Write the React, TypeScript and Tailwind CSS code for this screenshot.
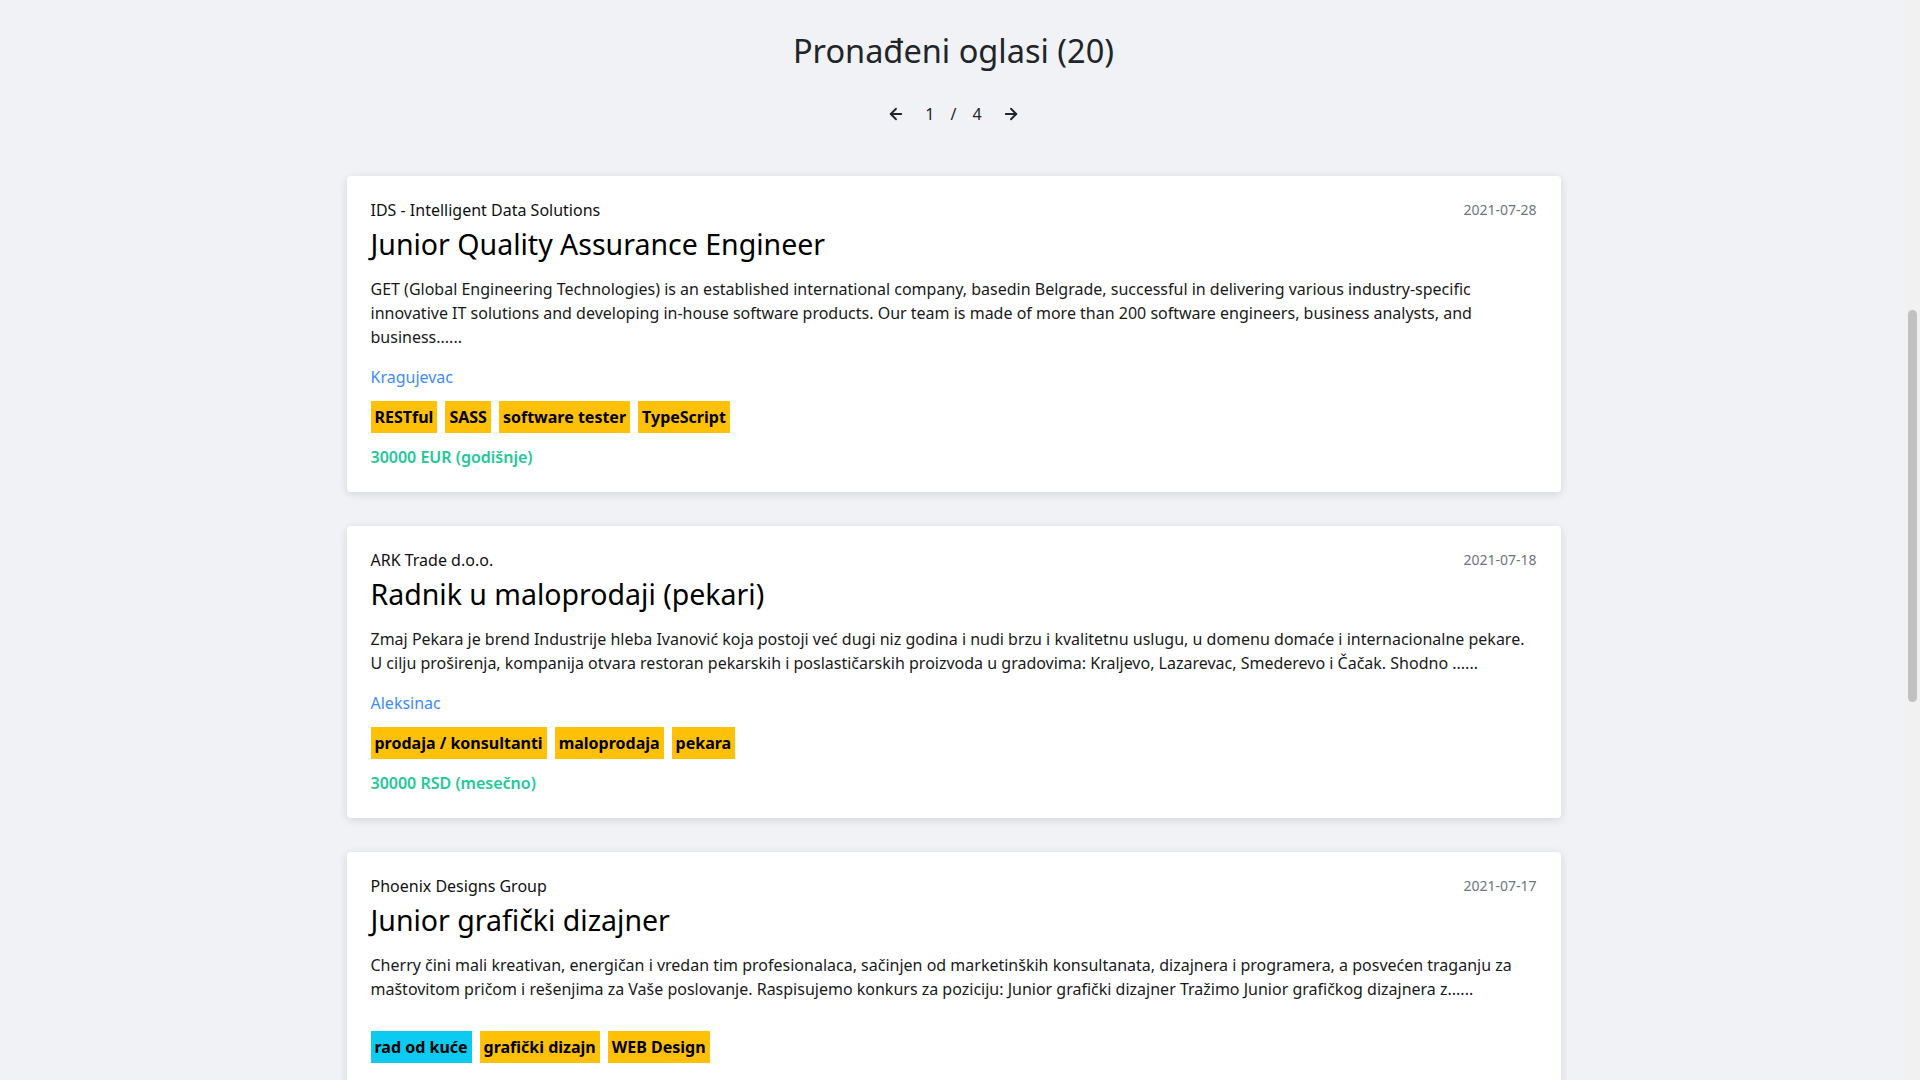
import React from 'react';
import { ArrowLeft, ArrowRight } from 'lucide-react';

type Tag = { name: string; remote?: boolean };

type Job = {
    id: number;
    company: string;
    date: string;
    title: string;
    description: string;
    city: string;
    tags: Tag[];
    salary: string;
};

const jobs: Job[] = [
    {
        id: 1,
        company: 'IDS - Intelligent Data Solutions',
        date: '2021-07-28',
        title: 'Junior Quality Assurance Engineer',
        description:
            'GET (Global Engineering Technologies) is an established international company, basedin Belgrade, successful in delivering various industry-specific innovative IT solutions and developing in-house software products. Our team is made of more than 200 software engineers, business analysts, and business......',
        city: 'Kragujevac',
        tags: [{ name: 'RESTful' }, { name: 'SASS' }, { name: 'software tester' }, { name: 'TypeScript' }],
        salary: '30000 EUR (godišnje)',
    },
    {
        id: 2,
        company: 'ARK Trade d.o.o.',
        date: '2021-07-18',
        title: 'Radnik u maloprodaji (pekari)',
        description:
            'Zmaj Pekara je brend Industrije hleba Ivanović koja postoji već dugi niz godina i nudi brzu i kvalitetnu uslugu, u domenu domaće i internacionalne pekare. U cilju proširenja, kompanija otvara restoran pekarskih i poslastičarskih proizvoda u gradovima: Kraljevo, Lazarevac, Smederevo i Čačak. Shodno ......',
        city: 'Aleksinac',
        tags: [{ name: 'prodaja / konsultanti' }, { name: 'maloprodaja' }, { name: 'pekara' }],
        salary: '30000 RSD (mesečno)',
    },
    {
        id: 3,
        company: 'Phoenix Designs Group',
        date: '2021-07-17',
        title: 'Junior grafički dizajner',
        description:
            'Cherry čini mali kreativan, energičan i vredan tim profesionalaca, sačinjen od marketinških konsultanata, dizajnera i programera, a posvećen traganju za maštovitom pričom i rešenjima za Vaše poslovanje. Raspisujemo konkurs za poziciju: Junior grafički dizajner Tražimo Junior grafičkog dizajnera z......',
        city: '',
        tags: [{ name: 'rad od kuće', remote: true }, { name: 'grafički dizajn' }, { name: 'WEB Design' }],
        salary: '60000 RSD (mesečno)',
    },
    {
        id: 4,
        company: 'Nordeus',
        date: '2021-07-15',
        title: 'Backend Developer',
        description:
            'Tražimo iskusnog backend programera koji će se pridružiti našem timu i raditi na razvoju skalabilnih servisa za milione korisnika širom sveta. Očekujemo poznavanje rada sa bazama podataka i ......',
        city: 'Beograd',
        tags: [{ name: 'Java' }, { name: 'SQL' }, { name: 'Docker' }],
        salary: '2500 EUR (mesečno)',
    },
    {
        id: 5,
        company: 'Comtrade',
        date: '2021-07-12',
        title: 'Frontend Developer',
        description:
            'Comtrade traži frontend programera sa iskustvom u razvoju modernih web aplikacija. Kandidat će raditi u agilnom timu na projektima za klijente iz inostranstva ......',
        city: 'Novi Sad',
        tags: [{ name: 'React' }, { name: 'TypeScript' }, { name: 'CSS' }],
        salary: '2000 EUR (mesečno)',
    },
];

const JobCard: React.FC<{ job: Job }> = ({ job }) => (
    <div className="bg-white rounded shadow-[0_2px_10px_rgba(0,0,0,0.12)] px-6 pt-[22px] pb-[23px]">
        <div className="flex justify-between items-center">
            <span className="text-base leading-6 text-[#111]">{job.company}</span>
            <span className="text-sm leading-6 text-[#6c757d]">{job.date}</span>
        </div>
        <h2 className="text-[28.5px] leading-[44px] text-black">{job.title}</h2>
        <p className="text-base leading-6 text-[#1a1a1a] mt-[11px]">{job.description}</p>
        {/* empty city still leaves some room, like the reference */}
        <a className={job.city ? 'block text-base leading-6 text-[#3d8bfd] mt-4' : 'block h-[2px] mt-4'}>{job.city}</a>
        <div className="flex flex-wrap gap-2 mt-3">
            {job.tags.map(tag => (
                <span
                    key={tag.name}
                    className={
                        tag.remote
                            ? 'bg-[#0dcaf0] text-black font-bold text-base leading-6 px-1 py-[4px]'
                            : 'bg-[#ffc107] text-black font-bold text-base leading-6 px-1 py-[4px]'
                    }
                >
                    {tag.name}
                </span>
            ))}
        </div>
        <div className="text-base leading-6 font-semibold text-[#20c997] mt-3">{job.salary}</div>
    </div>
);

const App: React.FC = () => {
    return (
        <div className="relative h-screen overflow-y-scroll bg-[#f0f2f5] font-['Noto_Sans',sans-serif]">
            <div className="pt-[27px] pb-12 mr-[13px]">
                <h1 className="text-center text-[32.5px] leading-[48px] text-[#212529]">Pronađeni oglasi (20)</h1>
                <div className="flex justify-center items-center gap-4 mt-[27px] text-base leading-6 text-[#212529]">
                    <ArrowLeft size={18} strokeWidth={2.5} />
                    <span className="ml-1">1</span>
                    <span>/</span>
                    <span className="mr-1">4</span>
                    <ArrowRight size={18} strokeWidth={2.5} />
                </div>
                <div className="w-[1214px] mx-auto mt-[50px] flex flex-col gap-[34px]">
                    {jobs.map(job => (
                        <JobCard key={job.id} job={job} />
                    ))}
                </div>
            </div>
            {/* scrollbar */}
            <div className="fixed top-0 right-0 w-[15px] h-screen bg-[#f1f1f1]">
                <div className="absolute left-[3px] right-[3px] top-[310px] h-[392px] rounded-full bg-[#c1c1c1]" />
            </div>
        </div>
    );
};

export default App;
